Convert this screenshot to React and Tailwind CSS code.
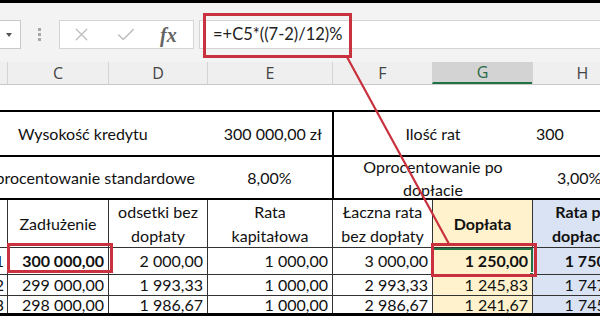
import React from 'react';
import { X, Check } from 'lucide-react';

const colW = ['w-[7px]', 'w-[101px]', 'w-[99px]', 'w-[125px]', 'w-[100px]', 'w-[100px]', 'w-[100px]'];
const letters = ['B', 'C', 'D', 'E', 'F', 'G', 'H'];

const rows = [
  { n: '1', h: 'h-[27px]', bold: true, vals: ['300 000,00', '2 000,00', '1 000,00', '3 000,00', '1 250,00', '1 750,00'] },
  { n: '2', h: 'h-[21px]', bold: false, vals: ['299 000,00', '1 993,33', '1 000,00', '2 993,33', '1 245,83', '1 747,50'] },
  { n: '3', h: 'h-[20px]', bold: false, vals: ['298 000,00', '1 986,67', '1 000,00', '2 986,67', '1 241,67', '1 745,00'] },
];

const boldCols = [0, 4, 5];

const heads = [
  ['Zadłużenie'],
  ['odsetki bez', 'dopłaty'],
  ['Rata', 'kapitałowa'],
  ['Łaczna rata', 'bez dopłaty'],
  ['Dopłata'],
  ['Rata po', 'dopłacie'],
];

const colBg = (i) => (i === 4 ? 'bg-[#fff2cc]' : i === 5 ? 'bg-[#dae3f3]' : 'bg-white');

const App = () => {
  return (
    <div className="relative w-[600px] h-[322px] overflow-hidden bg-white">
      {/* Top strip */}
      <div className="h-[3px] bg-black" />

      {/* Formula bar */}
      <div className="h-[59px] bg-[#f3f3f3] flex items-start pt-[17px] font-['Open_Sans',sans-serif]">
        <div className="w-[21px] h-[29px] bg-white border border-l-0 border-[#c8c8c8] flex items-center justify-end pr-[8px]">
          <div className="w-0 h-0 border-l-[3px] border-r-[3px] border-t-[4px] border-l-transparent border-r-transparent border-t-[#555]" />
        </div>
        <div className="ml-[17px] mt-[8px] flex flex-col gap-[2px]">
          <div className="w-[3px] h-[3px] bg-[#a6a6a6]" />
          <div className="w-[3px] h-[3px] bg-[#a6a6a6]" />
          <div className="w-[3px] h-[3px] bg-[#a6a6a6]" />
        </div>
        <div className="ml-[18px] w-[135px] h-[29px] bg-white border border-[#d4d4d4] flex items-center">
          <X className="ml-[11px] w-[21px] h-[21px] text-[#bdbdbd]" strokeWidth={1.5} />
          <Check className="ml-[23px] w-[22px] h-[22px] text-[#bdbdbd]" strokeWidth={1.6} />
          <span className="ml-[23px] font-['Liberation_Serif',serif] italic font-bold text-[20px] text-[#646464] leading-none">fx</span>
        </div>
        <div className="ml-[5px] flex-1 h-[29px] bg-white border border-r-0 border-[#d4d4d4] flex items-center pl-[13px]">
          <span className="font-['Lato',sans-serif] text-[16.5px] text-[#222]">=+C5*((7-2)/12)%</span>
        </div>
      </div>

      {/* Column headers */}
      <div className="h-[23px] flex bg-[#efefef] border-b border-[#c9c9c9] font-['Open_Sans',sans-serif] text-[16px] text-[#444]">
        {letters.map((l, i) => (
          <div
            key={l}
            className={`${colW[i]} shrink-0 flex items-center justify-center ${i > 0 ? 'border-l border-[#d4d4d4]' : ''} ${
              l === 'G' ? 'bg-[#d3d3d3] border-b-2 border-b-[#217346] text-[#2a6a46]' : ''
            }`}
          >
            {i > 0 ? l : ''}
          </div>
        ))}
      </div>

      {/* Sheet */}
      <div className="font-['Lato',sans-serif] text-[16px] text-[#111]">
        <div className="h-[25px]" />

        {/* Wysokość kredytu */}
        <div className="h-[45px] flex border-t-2 border-black">
          <div className="w-[207px] shrink-0 flex items-center pl-[18px] whitespace-nowrap">Wysokość kredytu</div>
          <div className="w-[125px] shrink-0 flex items-center justify-end pr-[10px] whitespace-nowrap">300 000,00 zł</div>
          <div className="w-[200px] shrink-0 flex items-center justify-center border-l-2 border-black">Ilość rat</div>
          <div className="w-[100px] shrink-0 flex items-center pl-[4px]">300</div>
        </div>

        {/* Oprocentowanie */}
        <div className="h-[43px] flex border-t-2 border-black">
          <div className="w-[207px] shrink-0 flex items-center justify-end pr-[12px] whitespace-nowrap">Oprocentowanie standardowe</div>
          <div className="w-[125px] shrink-0 flex items-center justify-center">8,00%</div>
          <div className="w-[200px] shrink-0 flex flex-col items-center justify-center leading-[23px] border-l-2 border-black">
            <span>Oprocentowanie po</span>
            <span>dopłacie</span>
          </div>
          <div className="w-[100px] shrink-0 flex items-center pl-[25px]">3,00%</div>
        </div>

        {/* Table header */}
        <div className="h-[50px] flex border-t-2 border-black border-b border-b-[#333]">
          <div className={`${colW[0]} shrink-0`} />
          {heads.map((h, i) => (
            <div
              key={i}
              className={`${colW[i + 1]} shrink-0 flex flex-col items-center justify-center leading-[24px] whitespace-nowrap border-l border-[#333] ${colBg(i)} ${
                i >= 4 ? 'font-bold' : ''
              }`}
            >
              {h.map((t) => (
                <span key={t}>{t}</span>
              ))}
            </div>
          ))}
        </div>

        {/* Data rows */}
        {rows.map((r, ri) => (
          <div key={r.n} className={`${r.h} flex ${ri < rows.length - 1 ? 'border-b border-[#333]' : 'border-b-[3px] border-black'}`}>
            <div className={`${colW[0]} shrink-0 flex items-center justify-end pr-[3px] whitespace-nowrap`}>{r.n}</div>
            {r.vals.map((v, i) => (
              <div
                key={i}
                className={`${colW[i + 1]} shrink-0 flex items-center justify-end pr-[4px] whitespace-nowrap border-l border-[#333] ${colBg(i)} ${
                  r.bold && boldCols.includes(i) ? 'font-bold' : ''
                }`}
              >
                {v}
              </div>
            ))}
          </div>
        ))}
      </div>

      {/* Excel selection on G5 */}
      <div className="absolute left-[432px] top-[248px] w-[101px] h-[28px] border-2 border-[#217346]" />
      <div className="absolute left-[529px] top-[272px] w-[5px] h-[5px] bg-[#217346] border border-white" />

      {/* Red highlights */}
      <div className="absolute left-[203px] top-[13px] w-[149px] h-[45px] border-[3px] border-[#c8313d]" />
      <div className="absolute left-[7px] top-[243px] w-[106px] h-[30px] border-[3px] border-[#c8313d]" />
      <div className="absolute left-[431px] top-[243px] w-[106px] h-[34px] border-[3px] border-[#c8313d]" />
      <svg className="absolute inset-0 pointer-events-none" width="600" height="322">
        <line x1="347" y1="57" x2="449" y2="244" stroke="#c8313d" strokeWidth="2.2" />
      </svg>
    </div>
  );
};

export default App;
